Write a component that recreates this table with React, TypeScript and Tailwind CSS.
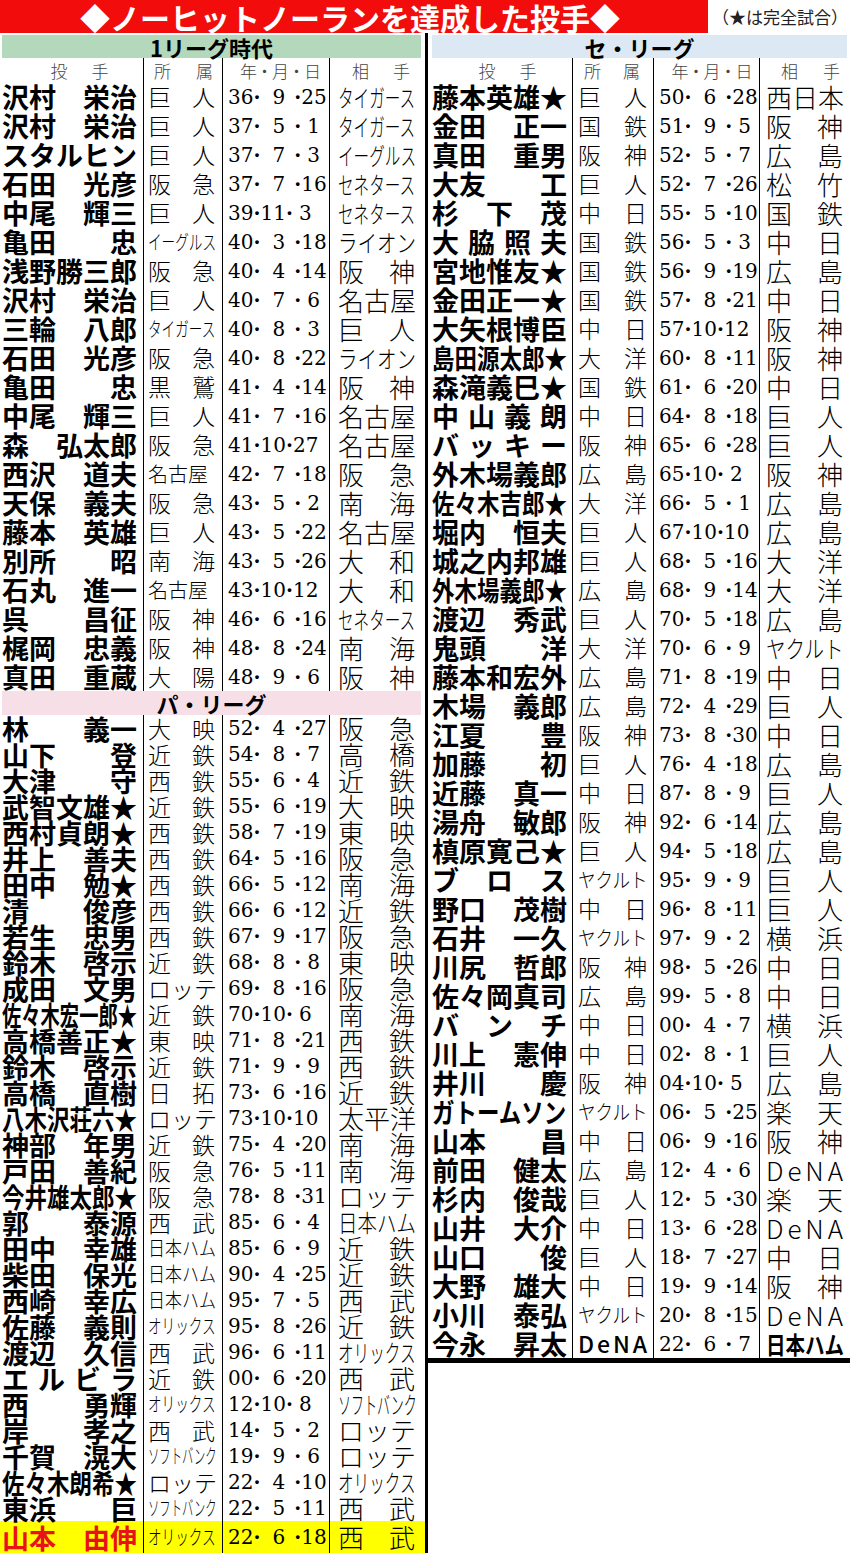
import React from "react";

// 行データ: 投手|所属|年.月.日|相手
const parse = (s: string) =>
  s
    .trim()
    .split("\n")
    .map((l) => l.trim().split("|"));

const ICHI = parse(`
沢村 栄治|巨 人|36.9.25|タイガース
沢村 栄治|巨 人|37.5.1|タイガース
スタルヒン|巨 人|37.7.3|イーグルス
石田 光彦|阪 急|37.7.16|セネタース
中尾 輝三|巨 人|39.11.3|セネタース
亀田 忠|イーグルス|40.3.18|ライオン
浅野勝三郎|阪 急|40.4.14|阪 神
沢村 栄治|巨 人|40.7.6|名古屋
三輪 八郎|タイガース|40.8.3|巨 人
石田 光彦|阪 急|40.8.22|ライオン
亀田 忠|黒 鷲|41.4.14|阪 神
中尾 輝三|巨 人|41.7.16|名古屋
森 弘太郎|阪 急|41.10.27|名古屋
西沢 道夫|名古屋|42.7.18|阪 急
天保 義夫|阪 急|43.5.2|南 海
藤本 英雄|巨 人|43.5.22|名古屋
別所 昭|南 海|43.5.26|大 和
石丸 進一|名古屋|43.10.12|大 和
呉 昌征|阪 神|46.6.16|セネタース
梶岡 忠義|阪 神|48.8.24|南 海
真田 重蔵|大 陽|48.9.6|阪 神
`);

const PA = parse(`
林 義一|大 映|52.4.27|阪 急
山下 登|近 鉄|54.8.7|高 橋
大津 守|西 鉄|55.6.4|近 鉄
武智文雄★|近 鉄|55.6.19|大 映
西村貞朗★|西 鉄|58.7.19|東 映
井上 善夫|西 鉄|64.5.16|阪 急
田中 勉★|西 鉄|66.5.12|南 海
清 俊彦|西 鉄|66.6.12|近 鉄
若生 忠男|西 鉄|67.9.17|阪 急
鈴木 啓示|近 鉄|68.8.8|東 映
成田 文男|ロ ッ テ|69.8.16|阪 急
佐々木宏一郎★|近 鉄|70.10.6|南 海
高橋善正★|東 映|71.8.21|西 鉄
鈴木 啓示|近 鉄|71.9.9|西 鉄
高橋 直樹|日 拓|73.6.16|近 鉄
八木沢荘六★|ロ ッ テ|73.10.10|太平洋
神部 年男|近 鉄|75.4.20|南 海
戸田 善紀|阪 急|76.5.11|南 海
今井雄太郎★|阪 急|78.8.31|ロッテ
郭 泰源|西 武|85.6.4|日本ハム
田中 幸雄|日本ハム|85.6.9|近 鉄
柴田 保光|日本ハム|90.4.25|近 鉄
西崎 幸広|日本ハム|95.7.5|西 武
佐藤 義則|オリックス|95.8.26|近 鉄
渡辺 久信|西 武|96.6.11|オリックス
エルビラ|近 鉄|00.6.20|西 武
西 勇輝|オリックス|12.10.8|ソフトバンク
岸 孝之|西 武|14.5.2|ロッテ
千賀 滉大|ソフトバンク|19.9.6|ロッテ
佐々木朗希★|ロ ッ テ|22.4.10|オリックス
東浜 巨|ソフトバンク|22.5.11|西 武
山本 由伸|オリックス|22.6.18|西 武
`);

const SE = parse(`
藤本英雄★|巨 人|50.6.28|西日本
金田 正一|国 鉄|51.9.5|阪 神
真田 重男|阪 神|52.5.7|広 島
大友 工|巨 人|52.7.26|松 竹
杉下茂|中 日|55.5.10|国 鉄
大脇照夫|国 鉄|56.5.3|中 日
宮地惟友★|国 鉄|56.9.19|広 島
金田正一★|国 鉄|57.8.21|中 日
大矢根博臣|中 日|57.10.12|阪 神
島田源太郎★|大 洋|60.8.11|阪 神
森滝義巳★|国 鉄|61.6.20|中 日
中山義朗|中 日|64.8.18|巨 人
バッキー|阪 神|65.6.28|巨 人
外木場義郎|広 島|65.10.2|阪 神
佐々木吉郎★|大 洋|66.5.1|広 島
堀内 恒夫|巨 人|67.10.10|広 島
城之内邦雄|巨 人|68.5.16|大 洋
外木場義郎★|広 島|68.9.14|大 洋
渡辺 秀武|巨 人|70.5.18|広 島
鬼頭 洋|大 洋|70.6.9|ヤクルト
藤本和宏外|広 島|71.8.19|中 日
木場 義郎|広 島|72.4.29|巨 人
江夏 豊|阪 神|73.8.30|中 日
加藤 初|巨 人|76.4.18|広 島
近藤 真一|中 日|87.8.9|巨 人
湯舟 敏郎|阪 神|92.6.14|広 島
槙原寛己★|巨 人|94.5.18|広 島
ブロス|ヤクルト|95.9.9|巨 人
野口 茂樹|中 日|96.8.11|巨 人
石井 一久|ヤクルト|97.9.2|横 浜
川尻 哲郎|阪 神|98.5.26|中 日
佐々岡真司|広 島|99.5.8|中 日
バンチ|中 日|00.4.7|横 浜
川上 憲伸|中 日|02.8.1|巨 人
井川 慶|阪 神|04.10.5|広 島
ガトームソン|ヤクルト|06.5.25|楽 天
山本 昌|中 日|06.9.16|阪 神
前田 健太|広 島|12.4.6|DeNA
杉内 俊哉|巨 人|12.5.30|楽 天
山井 大介|中 日|13.6.28|DeNA
山口 俊|巨 人|18.7.27|中 日
大野 雄大|中 日|19.9.14|阪 神
小川 泰弘|ヤクルト|20.8.15|DeNA
今永 昇太|DeNA|22.6.7|日本ハム
`);

type Cfg = {
  name: string;
  team: string;
  date: string;
  opp: string;
  nameW: number;
  teamW: number;
  oppW: number;
};

const LEFT: Cfg = {
  name: "w-[143px] pl-[2px] pr-[6px]",
  team: "w-[79px] pl-[4px] pr-[7px]",
  date: "w-[107px] pl-[5px]",
  opp: "w-[92px] pl-[8px] pr-[6px]",
  nameW: 135,
  teamW: 68,
  oppW: 78,
};

const RIGHT: Cfg = {
  name: "w-[144px] pl-[4px] pr-[5px]",
  team: "w-[81px] pl-[5px] pr-[6px]",
  date: "w-[106px] pl-[5px]",
  opp: "w-[91px] pl-[6px] pr-[7px]",
  nameW: 135,
  teamW: 70,
  oppW: 78,
};

const tw = (s: string, size: number) => {
  let w = 0;
  for (const ch of s) w += /[\x20-\x7e]/.test(ch) ? size * 0.62 : size;
  return w;
};

// 均等割り、入りきらなければ横に詰める
function Fit({
  text,
  width,
  size,
  small,
  smallCls = "",
}: {
  text: string;
  width: number;
  size: number;
  small?: number;
  smallCls?: string;
}) {
  const groups = text.split(" ");
  const total = groups.reduce((a, g) => a + tw(g, size), 0);
  if (groups.length > 1 || total <= width) {
    const parts = groups.length > 1 ? groups : Array.from(text);
    return (
      <div className="flex w-full justify-between whitespace-nowrap">
        {parts.map((p, i) => (
          <span key={i}>{p}</span>
        ))}
      </div>
    );
  }
  const s = Math.min(1, width / tw(text, small ?? size));
  return (
    <div
      className={`w-full whitespace-nowrap origin-left ${small ? smallCls : ""}`}
      style={{ transform: `scaleX(${s})` }}
    >
      {text}
    </div>
  );
}

function Dot() {
  return <span className="w-[7px] text-center font-bold">·</span>;
}

function DateText({ d }: { d: string }) {
  const [y, m, dd] = d.split(".");
  return (
    <div className="flex items-center whitespace-nowrap font-['DejaVu_Serif',serif] text-[20px] leading-none">
      <span>{y}</span>
      <Dot />
      <span className={m.length === 1 ? "pl-[12px] pr-[9px]" : ""}>{m}</span>
      <Dot />
      <span className={dd.length === 1 ? "w-[25px] text-center" : ""}>{dd}</span>
    </div>
  );
}

function Row({
  r,
  cfg,
  h,
  hl = false,
  strong = false,
}: {
  r: string[];
  cfg: Cfg;
  h: string;
  hl?: boolean;
  strong?: boolean;
}) {
  const [name, team, date, opp] = r;
  return (
    <div className={`flex leading-none ${h} ${hl ? "bg-[#ffff00]" : ""}`}>
      <div
        className={`${cfg.name} flex shrink-0 items-center text-[27px] font-bold ${
          hl ? "text-[#e8121b]" : "text-black"
        }`}
      >
        <Fit text={name} width={cfg.nameW} size={27} />
      </div>
      <div
        className={`${cfg.team} flex shrink-0 items-center border-l-[1.5px] border-black text-[23px] ${
          strong ? "font-medium" : "font-light"
        }`}
      >
        <Fit text={team} width={cfg.teamW} size={23} small={20} smallCls="text-[20px]" />
      </div>
      <div className={`${cfg.date} flex shrink-0 items-center border-l-[1.5px] border-black`}>
        <DateText d={date} />
      </div>
      <div
        className={`${cfg.opp} flex shrink-0 items-center border-l-[1.5px] border-black text-[26px] ${
          strong ? "font-bold" : "font-light"
        }`}
      >
        <Fit text={opp} width={cfg.oppW} size={26} small={24} smallCls="text-[24px]" />
      </div>
    </div>
  );
}

function ColHead({ right = false }: { right?: boolean }) {
  return (
    <div className="flex h-[24px] text-[17px] font-light leading-none text-[#444]">
      <div
        className={`${
          right ? "w-[144px] pl-[15px]" : "w-[143px] pl-[16px]"
        } flex items-center justify-center gap-[24px]`}
      >
        <span>投</span>
        <span>手</span>
      </div>
      <div
        className={`${
          right ? "w-[81px] pl-[11px] pr-[13px]" : "w-[79px] pl-[10px] pr-[9px]"
        } flex items-center justify-between border-l-[1.5px] border-black`}
      >
        <span>所</span>
        <span>属</span>
      </div>
      <div
        className={`${
          right ? "w-[106px] pl-[10px]" : "w-[107px] pl-[8px]"
        } flex items-center justify-center border-l-[1.5px] border-black tracking-[-1px]`}
      >
        年・月・日
      </div>
      <div
        className={`${
          right ? "w-[91px] pl-[21px] pr-[10px]" : "w-[92px] pl-[22px] pr-[11px]"
        } flex items-center justify-between border-l-[1.5px] border-black`}
      >
        <span>相</span>
        <span>手</span>
      </div>
    </div>
  );
}

export default function App() {
  return (
    <div className="flex h-[1553px] w-[850px] flex-col bg-white font-['Noto_Sans_CJK_JP',sans-serif] text-black">
      {/* タイトル */}
      <div className="flex h-[33px] shrink-0">
        <div className="flex w-[708px] items-center justify-center bg-[#f20c0c] pr-[8px] text-[30px] font-bold leading-none text-white">
          ◆ノーヒットノーランを達成した投手◆
        </div>
        <div className="flex flex-1 items-center pl-[4px] text-[17px] leading-none text-[#222]">
          （★は完全試合）
        </div>
      </div>

      <div className="flex flex-1">
        {/* 左: 1リーグ時代 + パ・リーグ */}
        <div className="w-[425px] shrink-0 pt-[2px]">
          <div className="ml-[2px] flex h-[23px] w-[419px] items-center justify-center bg-[#b4d8bc] text-[22px] font-bold leading-none">
            1リーグ時代
          </div>
          <ColHead />
          {ICHI.map((r, i) => (
            <Row key={i} r={r} cfg={LEFT} h="h-[29px]" />
          ))}
          <div className="ml-[2px] flex h-[24px] w-[419px] items-center justify-center bg-[#f6dfe7] text-[22px] font-bold leading-none">
            パ・リーグ
          </div>
          {PA.map((r, i) =>
            i === PA.length - 1 ? (
              <Row key={i} r={r} cfg={LEFT} h="h-[32px]" hl />
            ) : (
              <Row key={i} r={r} cfg={LEFT} h="h-[26px]" />
            )
          )}
        </div>

        <div className="w-[3px] shrink-0 bg-black" />

        {/* 右: セ・リーグ */}
        <div className="w-[422px] shrink-0 self-start pt-[2px]">
          <div className="ml-[4px] flex h-[23px] w-[415px] items-center justify-center bg-[#dce9f4] text-[22px] font-bold leading-none">
            セ・リーグ
          </div>
          <div className="border-b-[5px] border-black">
            <ColHead right />
            {SE.map((r, i) => (
              <Row key={i} r={r} cfg={RIGHT} h="h-[29px]" strong={i === SE.length - 1} />
            ))}
          </div>
        </div>
      </div>
    </div>
  );
}
